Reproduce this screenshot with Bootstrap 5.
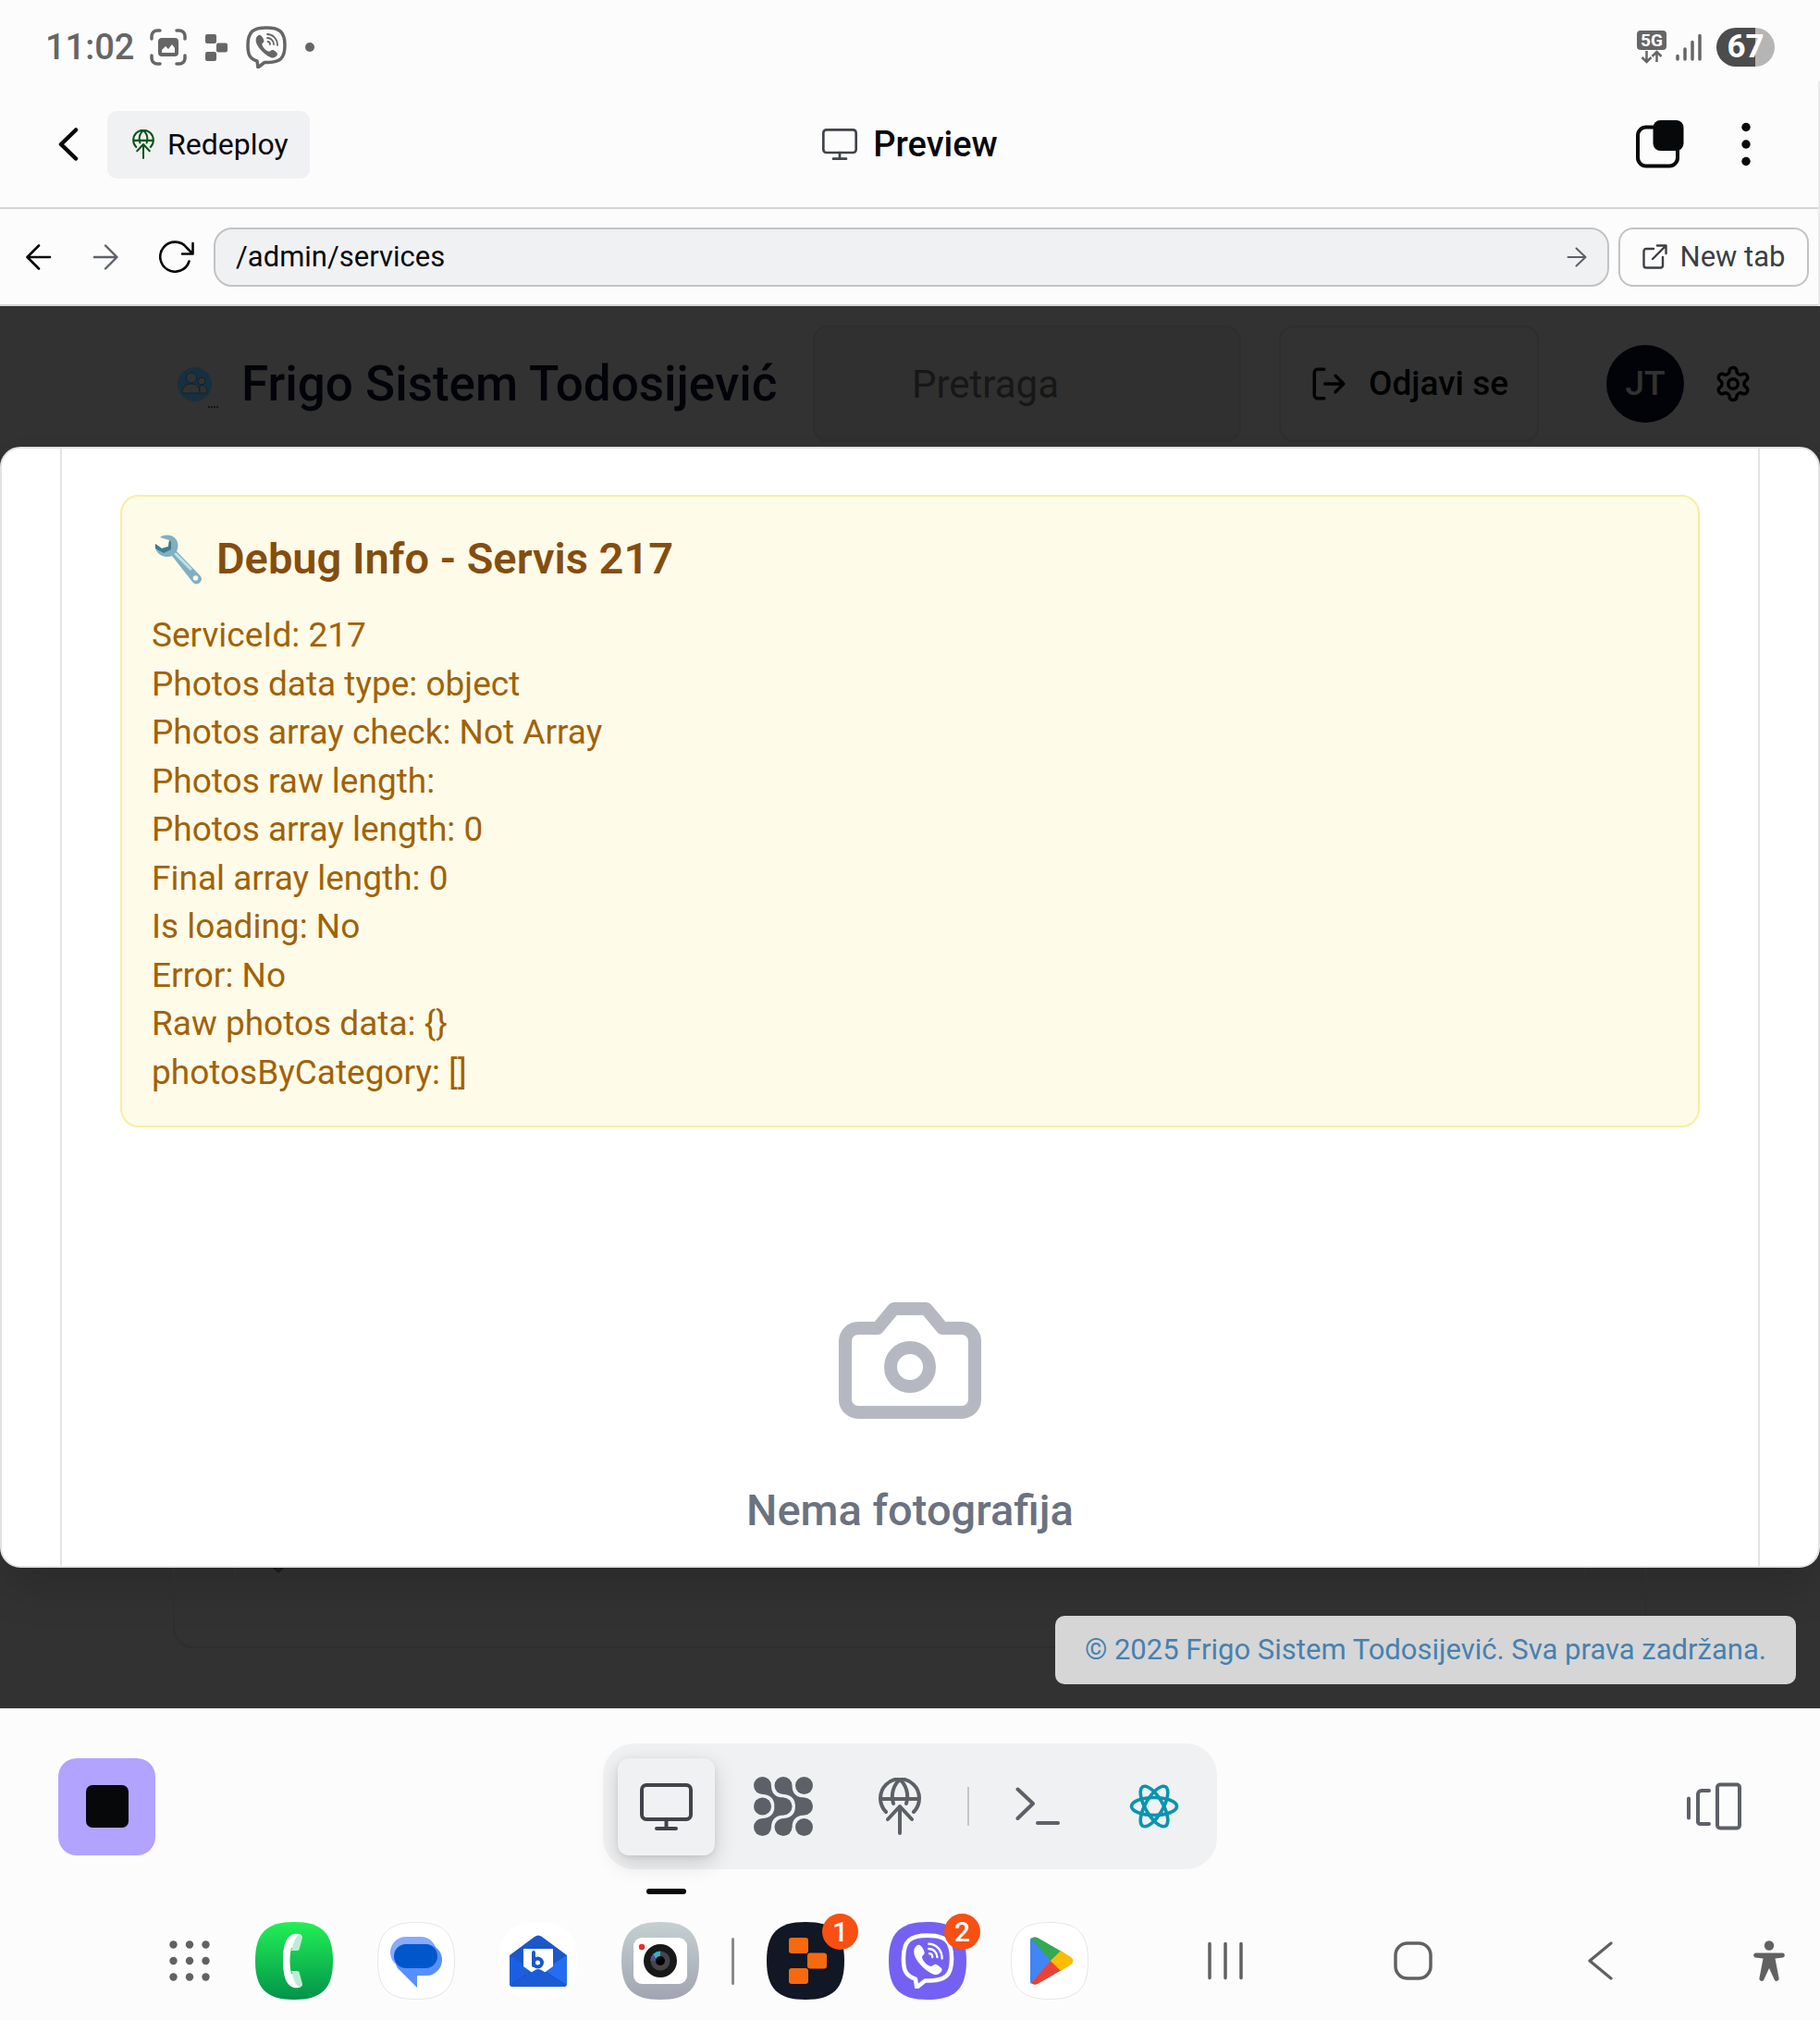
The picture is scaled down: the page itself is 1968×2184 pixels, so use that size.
<!DOCTYPE html>
<html lang="sr-Latn">
<head>
<meta charset="utf-8">
<meta name="viewport" content="width=device-width, initial-scale=1">
<title>Preview</title>
<link href="https://cdn.jsdelivr.net/npm/bootstrap@5.3.0/dist/css/bootstrap.min.css" rel="stylesheet">
<style>
  body { font-family: Roboto, "Noto Sans", sans-serif; background: #fcfcfc; color: #07080a; }
  svg { display: block; flex: none; }
  .plain-btn { border: 0; padding: 0; background: none; color: inherit; display: flex; align-items: center; justify-content: center; flex: none; }
  .side { flex: 1 1 0; }

  /* status bar */
  .status { height: 88px; padding: 14px 49px 0 49px; color: #666; }
  .status-icons { gap: 20px; }
  .clock { font-size: 38px; line-height: 44px; font-weight: 500; margin-right: -3px; }
  .battery { width: 63px; height: 42px; border-radius: 21px; color: #fff; font-size: 35px; line-height: 42px; font-weight: 700; text-align: center; background: linear-gradient(90deg, #4c4c4c 67%, #b5b5b5 67%); }

  /* workspace header */
  .chrome { border-right: 2px solid #ebebeb; }
  .topbar { height: 138px; border-bottom: 2px solid #d4d4d5; padding: 0 61px 0 63px; }
  .redeploy { height: 73px; border-radius: 10px; background: #f0f1f3; padding: 0 23px 0 27px; gap: 14px; font-size: 32px; line-height: 40px; margin-left: 31px; }
  .more { margin: 0 10px 0 60px; }
  .screen-title { font-size: 38px; line-height: 48px; font-weight: 500; gap: 17px; }
  .urlbar { height: 105px; border-bottom: 2px solid #d4d8d8; padding: 0 10px 0 28px; }
  .address { height: 64px; border: 2px solid #c0c3c4; border-radius: 20px; background: #f0f1f3; margin: 0 10px 0 21px; padding: 0 22px; }
  .address input { border: 0; outline: 0; background: none; font-size: 31px; line-height: 40px; padding: 0; color: #07080a; }
  .newtab { height: 64px; width: 206px; border: 2px solid #c0c3c4; border-radius: 16px; font-size: 31px; line-height: 40px; color: #3c3f44; gap: 14px; flex: none; }

  /* previewed app, dimmed behind the dialog */
  .stage { background: #323232; }
  .app-head { height: 152px; padding: 16px 73px 0 187px; }
  .app-name { font-size: 53px; line-height: 64px; font-weight: 500; color: #030409; margin: 0 0 0 22px; white-space: nowrap; }
  .search { width: 463px; height: 126px; border: 2px solid #2e2e2e; border-radius: 16px; background: #303030; padding: 0 20px 0 105px; font-size: 42px; color: #171716; flex: none; outline: 0; }
  .search::placeholder { color: #171716; opacity: 1; }
  .logout { width: 281px; height: 126px; border: 2px solid #2e2e2e; border-radius: 16px; font-size: 37px; font-weight: 500; color: #020202; gap: 22px; margin-left: 41px; }
  .avatar { width: 84px; height: 84px; background: #020308; color: #323232; font-size: 37px; font-weight: 500; margin: 0 32px 0 73px; flex: none; }

  .sheet { border: 2px solid #e2e2e2; border-radius: 22px; background: #fff; padding: 0 63px; box-shadow: 0 26px 48px -6px rgba(0,0,0,.16); position: relative; }
  .sheet-body { border: solid #e4e4e4; border-width: 0 2px; padding: 50px 63px 24px; }
  .debug { border: 2px solid #f8eea0; border-radius: 20px; background: #fefbe8; padding: 31px 32px; color: #a16207; }
  .debug h2 { font-size: 47px; line-height: 72px; font-weight: 600; color: #854d0e; gap: 14px; margin-bottom: 21px; }
  .debug ul { font-size: 37px; line-height: 52px; height: 525px; }
  .empty { padding-top: 168px; color: #6b7280; }
  .empty h3 { font-size: 47px; line-height: 73px; font-weight: 500; margin: 41px 0 0; }

  .app-foot { height: 152px; }
  .ghost-card { height: 87px; margin: 0 187px; border: 2px solid #2e2e2e; border-top: 0; border-radius: 0 0 22px 22px; padding: 0 64px; }
  .ghost-table { height: 24px; border: solid #2d2d2d; border-width: 0 2px; padding-left: 38px; }
  .rights { position: absolute; right: 26px; bottom: 26px; height: 74px; line-height: 74px; border-radius: 10px; background: #d6d6d6; color: #4781b0; font-size: 31px; padding: 0 32px; white-space: nowrap; }

  /* tool dock */
  .tools { padding: 38px 63px 0; }
  .stop { width: 105px; height: 105px; border-radius: 20px; background: #b1a3ff; }
  .pill { background: #f0f1f3; border-radius: 34px; padding: 16px; gap: 21px; height: 136px; color: #5d6067; }
  .tool { width: 105px; height: 105px; border-radius: 12px; position: relative; }
  .tool.current { background: #f0f1f3; color: #40434a; box-shadow: 0 8px 24px rgba(0,0,0,.16), 0 2px 6px rgba(0,0,0,.08); }
  .tool.current::after { content: ""; position: absolute; left: 31px; top: 141px; width: 43px; height: 6px; border-radius: 3px; background: #07080a; }
  .tool-rule { width: 2px; height: 42px; background: #c3c5c8; }
  .tabs-btn { margin-right: 21px; }

  /* system taskbar */
  .taskbar { padding: 57px 37px 21px 183px; color: #616161; }
  .apps { gap: 48px; }
  .apps-rule { width: 3px; height: 51px; background: #8a8a8a; border-radius: 2px; margin: 0 -13px; }
  .app-icon { position: relative; width: 84px; height: 84px; }
  .count { position: absolute; right: -15px; top: -9px; width: 39px; height: 39px; border-radius: 50%; background: #f84f13; color: #fff; font-size: 30px; line-height: 40px; font-weight: 500; text-align: center; }
  .sysnav { gap: 161px; }
  .access { margin-left: 143px; }
</style>
<script src="https://cdn.jsdelivr.net/npm/bootstrap@5.3.0/dist/js/bootstrap.bundle.min.js"></script>
</head>
<body>

<svg width="0" height="0" class="position-absolute" aria-hidden="true">
  <defs>
    <symbol id="globe-up" viewBox="0 0 46 62">
      <g fill="none" stroke="currentColor" stroke-width="4" stroke-linecap="round" stroke-linejoin="round">
        <path d="M8 37A21 21 0 1 1 38 37M2 23h42M16 28C13 18 16 8 23 2c7 6 10 16 7 26M23 60V32M10 45l13-14 13 14"/>
      </g>
    </symbol>
    <symbol id="monitor" viewBox="0 0 57 51">
      <g fill="none" stroke="currentColor" stroke-width="4" stroke-linecap="round">
        <rect x="2" y="2" width="53" height="37" rx="5"/><path d="M28.500 39v10M18 49h21"/>
      </g>
    </symbol>
    <symbol id="handset" viewBox="0 0 44 46">
      <path fill="none" stroke="currentColor" stroke-width="3.500" stroke-linejoin="round" d="M22 2C36 2 42 6 42 21S36 39 24 39.500h-4L13 45l-1-7C4 35.500 2 31 2 21 2 6 8 2 22 2z"/>
      <path fill="currentColor" d="M11 13c1-2 3-4 4.500-3 2 1 4 5 4 6.500s-2.500 2-2 4c1 3.500 4.500 6.500 7 7 2 .500 2.500-2 4.500-1.500s5 3 5 4.500-2.500 3.500-4.500 4C25 35.500 8 22 11 13z"/>
      <path fill="none" stroke="currentColor" stroke-width="1.800" stroke-linecap="round" d="M23 9c6 0 11 5 11 12M23 13c4 0 7 3.500 7 7M23.500 17c1.500 0 2.500 1 2.500 3"/>
    </symbol>
    <symbol id="squircle" viewBox="0 0 84 84"><path d="M42 0C72 0 84 12 84 42S72 84 42 84 0 72 0 42 12 0 42 0z"/></symbol>
    <linearGradient id="green" x2="0" y2="1"><stop stop-color="#22f055"/><stop offset="1" stop-color="#02934a"/></linearGradient>
    <linearGradient id="silver" x2="0" y2="1"><stop stop-color="#c5d0d2"/><stop offset="1" stop-color="#a1a4b2"/></linearGradient>
  </defs>
</svg>

<div class="min-vh-100 d-flex flex-column">

  <div class="status d-flex align-items-center justify-content-between">
    <div class="status-icons d-flex align-items-center">
      <span class="clock">11:02</span>
      <svg width="40" height="40" viewBox="0 0 40 40"><g fill="none" stroke="#666" stroke-width="3.500" stroke-linecap="round"><path d="M2 11V8a6 6 0 0 1 6-6h3M29 2h3a6 6 0 0 1 6 6v3M38 29v3a6 6 0 0 1-6 6h-3M11 38H8a6 6 0 0 1-6-6v-3"/></g><rect x="9" y="10" width="22" height="20" rx="4" fill="#666"/><path d="M13 26v-3l4-4 3 3 4-5 3 4v5z" fill="#fcfcfc"/></svg>
      <svg width="24" height="29" viewBox="0 0 24 29"><g fill="#666"><rect width="12" height="10" rx="2"/><rect x="12" y="9.500" width="12" height="10" rx="2"/><rect y="19" width="12" height="10" rx="2"/></g></svg>
      <svg width="44" height="46"><use href="#handset"/></svg>
      <svg width="10" height="10"><circle cx="5" cy="5" r="5" fill="#666"/></svg>
    </div>
    <div class="d-flex align-items-center">
      <svg width="32" height="36" viewBox="0 0 32 36"><rect width="32" height="21" rx="4" fill="#666"/><text x="16" y="17" font-family="Roboto, sans-serif" font-weight="700" font-size="19" text-anchor="middle" fill="#fff">5G</text><path d="M10.500 22v12M5.500 29l5 5 5-5M21.500 34V23M16.500 28l5-5 5 5" fill="none" stroke="#666" stroke-width="2.500"/></svg>
      <svg width="30" height="30" viewBox="0 0 30 30" class="ms-2 me-3 ps-0"><path d="M4 28v-3.500M12 28V17M20 28V9.500M28 28V2.500" stroke="#666" stroke-width="3.500" stroke-linecap="round"/></svg>
      <div class="battery">67</div>
    </div>
  </div>

  <header class="chrome">
    <div class="topbar d-flex align-items-center">
      <div class="side d-flex align-items-center">
        <button class="plain-btn" aria-label="Back"><svg width="22" height="36" viewBox="0 0 22 36"><path d="M19 2.500L3 18l16 15.500" fill="none" stroke="#07080a" stroke-width="4.500" stroke-linecap="round" stroke-linejoin="round"/></svg></button>
        <button class="plain-btn redeploy"><svg width="24" height="32" color="#0c5519"><use href="#globe-up"/></svg>Redeploy</button>
      </div>
      <div class="screen-title d-flex align-items-center"><svg width="38" height="34" color="#40434a"><use href="#monitor"/></svg>Preview</div>
      <div class="side d-flex align-items-center justify-content-end">
        <button class="plain-btn" aria-label="Windows"><svg width="52" height="52" viewBox="0 0 52 52"><rect x="2" y="7.500" width="43" height="42" rx="9" fill="none" stroke="#07080a" stroke-width="4"/><rect x="18.500" y="0" width="33" height="33" rx="8" fill="#07080a"/></svg></button>
        <button class="plain-btn more" aria-label="More"><svg width="14" height="48" viewBox="0 0 14 48"><g fill="#07080a"><circle cx="7" cy="5.500" r="4.700"/><circle cx="7" cy="24" r="4.700"/><circle cx="7" cy="42.500" r="4.700"/></g></svg></button>
      </div>
    </div>
    <div class="urlbar d-flex align-items-center">
      <div class="d-flex align-items-center" style="gap:44px">
        <button class="plain-btn" aria-label="Previous page"><svg width="28" height="28" viewBox="0 0 28 28"><path d="M26 14H2M14 1.500L1.500 14 14 26.500" fill="none" stroke="#07080a" stroke-width="2.600" stroke-linecap="round" stroke-linejoin="round"/></svg></button>
        <button class="plain-btn" aria-label="Next page"><svg width="28" height="28" viewBox="0 0 28 28"><path d="M2 14h24M14 1.500L26.500 14 14 26.500" fill="none" stroke="#5d6067" stroke-width="2.400" stroke-linecap="round" stroke-linejoin="round"/></svg></button>
        <button class="plain-btn" aria-label="Reload"><svg width="38" height="35" viewBox="0 0 38 35"><path d="M32.500 22.500A16 16 0 1 1 30 8l6 6M36.500 3v11.500H25" fill="none" stroke="#07080a" stroke-width="2.600" stroke-linecap="round" stroke-linejoin="round"/></svg></button>
      </div>
      <form class="address d-flex align-items-center flex-grow-1">
        <input class="flex-grow-1" type="text" value="/admin/services" aria-label="Address">
        <button class="plain-btn" type="button" aria-label="Go"><svg width="22" height="22" viewBox="0 0 22 22"><path d="M1.500 11h19M10.500 1.500L20.500 11l-10 9.500" fill="none" stroke="#5d6067" stroke-width="2" stroke-linecap="round" stroke-linejoin="round"/></svg></button>
      </form>
      <button class="plain-btn newtab"><svg width="27" height="27" viewBox="0 0 27 27"><path d="M12 5H4a2.500 2.500 0 0 0-2.500 2.500V23A2.500 2.500 0 0 0 4 25.500h15.500A2.500 2.500 0 0 0 22 23v-9M16 1.500h9.500V10M25 2L11 16" fill="none" stroke="#3c3f44" stroke-width="2.400" stroke-linecap="round" stroke-linejoin="round"/></svg>New tab</button>
    </div>
  </header>

  <main class="stage">
    <div class="app-head d-flex align-items-center">
      <svg width="52" height="52" viewBox="0 0 52 52"><circle cx="23.500" cy="26.500" r="18.500" fill="#17303f"/><g fill="#323232" stroke="#10222d"><circle cx="20" cy="19.500" r="5.500"/><path d="M10 36c0-7 4-10 10-10s9 4 9 10z"/><circle cx="31" cy="23" r="4"/><path d="M29 36v-8c5-1 8 2 8 8z"/></g><path d="M38 51h12" stroke="#161616" stroke-width="2" stroke-dasharray="2 1"/></svg>
      <h1 class="app-name flex-grow-1">Frigo Sistem Todosijević</h1>
      <input class="search" type="search" placeholder="Pretraga" aria-label="Pretraga">
      <button class="plain-btn logout"><svg width="42" height="42" viewBox="0 0 24 24"><path d="M9 3H5a2 2 0 0 0-2 2v14a2 2 0 0 0 2 2h4M9.500 12H21M16 7l5 5-5 5" fill="none" stroke="#020202" stroke-width="2" stroke-linecap="round" stroke-linejoin="round"/></svg>Odjavi se</button>
      <div class="avatar rounded-circle d-flex align-items-center justify-content-center">JT</div>
      <button class="plain-btn" aria-label="Podešavanja"><svg width="42" height="42" viewBox="0 0 24 24" fill="none" stroke="#020202" stroke-width="2" stroke-linecap="round" stroke-linejoin="round"><path d="M12.220 2h-.440a2 2 0 0 0-2 2v.180a2 2 0 0 1-1 1.730l-.430.250a2 2 0 0 1-2 0l-.150-.080a2 2 0 0 0-2.730.730l-.220.380a2 2 0 0 0 .730 2.730l.150.100a2 2 0 0 1 1 1.720v.510a2 2 0 0 1-1 1.740l-.150.090a2 2 0 0 0-.730 2.730l.220.380a2 2 0 0 0 2.730.730l.150-.080a2 2 0 0 1 2 0l.430.250a2 2 0 0 1 1 1.730V20a2 2 0 0 0 2 2h.440a2 2 0 0 0 2-2v-.180a2 2 0 0 1 1-1.730l.430-.250a2 2 0 0 1 2 0l.150.080a2 2 0 0 0 2.730-.730l.220-.390a2 2 0 0 0-.730-2.730l-.150-.080a2 2 0 0 1-1-1.740v-.500a2 2 0 0 1 1-1.740l.150-.090a2 2 0 0 0 .730-2.730l-.220-.380a2 2 0 0 0-2.730-.730l-.150.080a2 2 0 0 1-2 0l-.430-.250a2 2 0 0 1-1-1.730V4a2 2 0 0 0-2-2z"/><circle cx="12" cy="12" r="3"/></svg></button>
    </div>

    <section class="sheet" role="dialog" aria-label="Servis 217">
      <div class="sheet-body">
        <div class="debug">
          <h2 class="d-flex align-items-center">
            <svg width="56" height="56" viewBox="0 0 56 56"><path d="M9 5c6-4 14-3 18 3 2 4 2 8 0 12l25 26c3 3 2 6 0 8s-6 2-8-1L22 25c-5 2-11 1-15-3-3-3-4-7-3-10l7 5 7-2 1-7z" fill="#82aec0"/><path d="M4 12l7 5 7-2 1-7 2 2v8l-8 4-9-5z" fill="#3a7d90"/><path d="M26 23l16 16" stroke="#b9e4ea" stroke-width="3" stroke-linecap="round"/><circle cx="47.500" cy="49" r="2.800" fill="#fefbe8"/></svg>
            Debug Info - Servis 217
          </h2>
          <ul class="list-unstyled mb-0 d-flex flex-column justify-content-between">
            <li>ServiceId: 217</li>
            <li>Photos data type: object</li>
            <li>Photos array check: Not Array</li>
            <li>Photos raw length:</li>
            <li>Photos array length: 0</li>
            <li>Final array length: 0</li>
            <li>Is loading: No</li>
            <li>Error: No</li>
            <li>Raw photos data: {}</li>
            <li>photosByCategory: []</li>
          </ul>
        </div>
        <div class="empty d-flex flex-column align-items-center">
          <svg width="168" height="168" viewBox="0 0 24 24" fill="none" stroke="#b5b8c0" stroke-width="2" stroke-linecap="round" stroke-linejoin="round"><path d="M14.500 4h-5L7 7H4a2 2 0 0 0-2 2v9a2 2 0 0 0 2 2h16a2 2 0 0 0 2-2V9a2 2 0 0 0-2-2h-3z"/><circle cx="12" cy="13" r="3"/></svg>
          <h3>Nema fotografija</h3>
        </div>
      </div>
    </section>

    <div class="app-foot position-relative">
      <div class="ghost-card"><div class="ghost-table"><svg width="20" height="8" viewBox="0 0 20 8"><path d="M2-2l6 6 6-6" fill="none" stroke="#191919" stroke-width="3"/></svg></div></div>
      <footer class="rights">© 2025 Frigo Sistem Todosijević. Sva prava zadržana.</footer>
    </div>
  </main>

  <nav class="tools d-flex align-items-center" aria-label="Tools">
    <div class="side"><button class="plain-btn stop" aria-label="Stop"><svg width="46" height="46"><rect width="46" height="46" rx="7" fill="#07080a"/></svg></button></div>
    <div class="pill d-flex align-items-center">
      <button class="plain-btn tool current" aria-label="Preview"><svg width="57" height="51"><use href="#monitor"/></svg></button>
      <button class="plain-btn tool" aria-label="Agent"><svg width="64" height="64" viewBox="0 0 64 64"><g fill="currentColor"><circle cx="9.500" cy="9.500" r="9.500"/><circle cx="32" cy="9.500" r="9.500"/><circle cx="54.500" cy="9.500" r="9.500"/><circle cx="9.500" cy="32" r="9.500"/><circle cx="32" cy="32" r="9.500"/><circle cx="54.500" cy="32" r="9.500"/><circle cx="9.500" cy="54.500" r="9.500"/><circle cx="32" cy="54.500" r="9.500"/><circle cx="54.500" cy="54.500" r="9.500"/>
        <path d="M19 10c0 8 5 12.500 13 12.500L41.500 32 32 41.500c-8 0-13 5-13 13L9.500 45c8 0 13-5 13-13s-5-13-13-13zM41.500 10c0 8 5 12.500 13 12.500v19c-8 0-13 5-13 13L32 45c8 0 13-5 13-13s-5-13-13-13z"/></g></svg></button>
      <button class="plain-btn tool" aria-label="Deploy"><svg width="46" height="62"><use href="#globe-up"/></svg></button>
      <span class="tool-rule"></span>
      <button class="plain-btn tool" aria-label="Shell"><svg width="48" height="42" viewBox="0 0 48 42"><path d="M2.500 2.500L19 18 2.500 34M24 39h22" fill="none" stroke="currentColor" stroke-width="4" stroke-linecap="round" stroke-linejoin="round"/></svg></button>
      <button class="plain-btn tool" aria-label="React"><svg width="54" height="48" viewBox="-27 -24 54 48"><g fill="none" stroke="#0a94b0" stroke-width="3.600"><ellipse rx="24.500" ry="9.500"/><ellipse rx="24.500" ry="9.500" transform="rotate(60)"/><ellipse rx="24.500" ry="9.500" transform="rotate(120)"/></g></svg></button>
    </div>
    <div class="side d-flex justify-content-end"><button class="plain-btn tabs-btn" aria-label="Tabs"><svg width="60" height="52" viewBox="0 0 60 52"><g fill="none" stroke="#5d6067" stroke-width="4" stroke-linecap="round"><path d="M2 17.500v21M24 9h-8a4 4 0 0 0-4 4v29a2.500 2.500 0 0 0 3 3h9"/><rect x="33" y="2.500" width="24" height="47" rx="3"/></g></svg></button></div>
  </nav>

  <nav class="taskbar d-flex align-items-center" aria-label="System">
    <div class="apps d-flex align-items-center">
      <button class="plain-btn" aria-label="Apps"><svg width="45" height="45" viewBox="0 0 45 45"><g fill="#616161"><circle cx="4.500" cy="4.500" r="4.200"/><circle cx="22" cy="4.500" r="4.200"/><circle cx="39.500" cy="4.500" r="4.200"/><circle cx="4.500" cy="22" r="4.200"/><circle cx="22" cy="22" r="4.200"/><circle cx="39.500" cy="22" r="4.200"/><circle cx="4.500" cy="39.500" r="4.200"/><circle cx="22" cy="39.500" r="4.200"/><circle cx="39.500" cy="39.500" r="4.200"/></g></svg></button>
      <button class="plain-btn app-icon" aria-label="Phone"><svg width="84" height="84"><use href="#squircle" fill="url(#green)"/><path d="M50 17c2-3-4-5-8-4-9 2-12 14-12 29s3 27 12 29c4 1 10-1 8-4l-3-11h-8c-2-8-2-20 0-28h8z" fill="#fff"/><path d="M48 13c2 1 3 2 3 4l-3 11c0 2-1 3-3 3h-6c2-6 3-14 9-18zM48 71c2-1 3-2 3-4l-3-11c0-2-1-3-3-3h-6c2 6 3 14 9 18z" fill="#beecd2"/></svg></button>
      <button class="plain-btn app-icon" aria-label="Messages"><svg width="84" height="84"><path d="M42 .5C72 .5 83.500 12 83.500 42S72 83.500 42 83.500.5 72 .5 42 12 .5 42 .5z" fill="#fff" stroke="#e6e6e6"/><rect x="14" y="16" width="50" height="34" rx="17" fill="#86abff"/><path d="M35 24h18a17 17 0 0 1 0 34H43v13L22 50c-6-10-1-26 13-26z" fill="#588fff"/><rect x="18" y="24" width="47" height="26" rx="13" fill="#0057cc"/></svg></button>
      <button class="plain-btn app-icon" aria-label="Mail"><svg width="84" height="84"><use href="#squircle" fill="#fff"/><path d="M11 36L38 16q4-3 8 0l27 20v31q0 3-3 3H14q-3 0-3-3z" fill="#1b57c9"/><path d="M11 36v32l25-16z" fill="#1b5fe0"/><path d="M73 36v32L48 52z" fill="#246df2"/><path d="M26 29h32v19L47 56H37L26 48z" fill="#fff"/><path d="M12 69l25-16q5-4 10 0l25 16-3 1H15z" fill="#1b5bd6"/><path d="M37 33v14" stroke="#1b57c9" stroke-width="4" stroke-linecap="round"/><circle cx="41.500" cy="44" r="4.500" fill="none" stroke="#1b57c9" stroke-width="4"/></svg></button>
      <button class="plain-btn app-icon" aria-label="Camera"><svg width="84" height="84"><use href="#squircle" fill="url(#silver)"/><rect x="13" y="17" width="58" height="50" rx="9" fill="#fff"/><circle cx="22" cy="27" r="3.200" fill="#f02b2b"/><circle cx="42" cy="42" r="18" fill="#181819"/><circle cx="42" cy="42" r="10.500" fill="#454547"/><path d="M31.500 42A10.500 10.500 0 0 1 42 31.500v6z" fill="#2bb5d0"/><path d="M31.500 42q0-4 3-7l4 7z" fill="#57508a"/><circle cx="42" cy="42" r="5" fill="#000"/></svg></button>
      <span class="apps-rule"></span>
      <button class="plain-btn app-icon" aria-label="Replit"><svg width="84" height="84"><use href="#squircle" fill="#111724"/><g fill="#f7690e"><rect x="24" y="17" width="21" height="17" rx="3"/><rect x="44" y="33.500" width="21" height="17" rx="3"/><rect x="24" y="50" width="21" height="17" rx="3"/></g></svg><span class="count">1</span></button>
      <button class="plain-btn app-icon" aria-label="Viber"><svg width="84" height="84"><use href="#squircle" fill="#7461f2"/><svg x="12" y="12" width="60" height="60" color="#fff"><use href="#handset"/></svg></svg><span class="count">2</span></button>
      <button class="plain-btn app-icon" aria-label="Play Store"><svg width="84" height="84"><path d="M42 .5C72 .5 83.500 12 83.500 42S72 83.500 42 83.500.5 72 .5 42 12 .5 42 .5z" fill="#fff" stroke="#e6e6e6"/><path d="M21 20v44q0 2 1 3l22-25-22-25q-1 1-1 3z" fill="#4285f4"/><path d="M22 18q3-3 7-1l26 15-12 10z" fill="#34a853"/><path d="M22 66q3 3 7 1l26-15-12-10z" fill="#ea4335"/><path d="M54 31l11 7q5 4 0 8l-11 7-11-11z" fill="#fbbc04"/></svg></button>
    </div>
    <div class="sysnav d-flex align-items-center ms-auto">
      <button class="plain-btn" aria-label="Recents"><svg width="42" height="42"><path d="M4 2.500v37M21 2.500v37M38 2.500v37" stroke="#616161" stroke-width="3.500" stroke-linecap="round"/></svg></button>
      <button class="plain-btn" aria-label="Home"><svg width="42" height="42"><rect x="2" y="2" width="38" height="38" rx="13" fill="none" stroke="#616161" stroke-width="3.500"/></svg></button>
      <button class="plain-btn" aria-label="Back"><svg width="42" height="42"><path d="M32 2L9 21l23 19" fill="none" stroke="#616161" stroke-width="3.200" stroke-linecap="round" stroke-linejoin="round"/></svg></button>
    </div>
    <button class="plain-btn access" aria-label="Accessibility"><svg width="36" height="44" viewBox="0 0 36 44"><g fill="#616161"><circle cx="18" cy="5.500" r="5.200"/><path d="M3 13.500h30a2.600 2.600 0 0 1 0 5l-8.500 1 4 21a2.500 2.500 0 0 1-5 1.500L18 30l-5.500 12a2.500 2.500 0 0 1-5-1.500l4-21-8.500-1a2.600 2.600 0 0 1 0-5z"/></g></svg></button>
  </nav>
</div>
</body>
</html>
